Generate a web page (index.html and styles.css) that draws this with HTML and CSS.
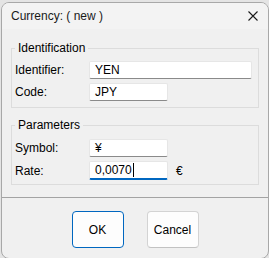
FILE: index.html
```html
<!DOCTYPE html>
<html lang="en">
<head>
    <meta charset="UTF-8">
    <link rel="stylesheet" href="styles.css">
</head>
<body>
    <div class="window">
        <div class="titlebar">
            <span class="title">Currency: ( new )</span>
            <svg class="close" width="10" height="10" viewBox="0 0 10 10">
                <path d="M0.5,0.5 L9.5,9.5 M9.5,0.5 L0.5,9.5" stroke="#1a1a1a" stroke-width="1.1" fill="none"/>
            </svg>
        </div>

        <fieldset class="group">
            <legend>Identification</legend>
            <div class="row">
                <span class="lbl">Identifier:</span>
                <div class="edit wide">YEN</div>
            </div>
            <div class="row">
                <span class="lbl">Code:</span>
                <div class="edit">JPY</div>
            </div>
        </fieldset>

        <fieldset class="group second">
            <legend>Parameters</legend>
            <div class="row">
                <span class="lbl">Symbol:</span>
                <div class="edit">¥</div>
            </div>
            <div class="row">
                <span class="lbl">Rate:</span>
                <div class="edit focused">0,0070<span class="caret"></span></div>
                <span class="unit">€</span>
            </div>
        </fieldset>

        <div class="footer">
            <button class="btn default">OK</button>
            <button class="btn">Cancel</button>
        </div>
    </div>
</body>
</html>
```

FILE: styles.css
```css
:root {
    --face: #f0f0f0;
    --title: #f3f3f3;
    --group-line: #dcdcdc;
    --accent: #0067c0;
    --text: #000000;
}

html, body {
    margin: 0;
    padding: 0;
}

body {
    background: #e4e4e4;
    font-family: 'Liberation Sans', Arial, sans-serif;
    font-size: 12px;
    color: var(--text);
}

.window {
    box-sizing: border-box;
    width: 268px;
    margin: 2px 0 0 1px;
    background: var(--face);
    border: 1px solid #a8a8a8;
    border-radius: 8px;
    overflow: hidden;
}

.titlebar {
    height: 26px;
    display: flex;
    align-items: center;
    justify-content: space-between;
    padding: 0 10px 0 9px;
    background: var(--title);
}

.title {
    color: #1a1a1a;
}

.close {
    display: block;
}

.group {
    margin: 12px 9px 0 9px;
    padding: 5px 6px 6px 3px;
    border: 1px solid var(--group-line);
    display: flex;
    flex-direction: column;
    gap: 4px;
    min-width: 0;
}

.group.second {
    margin-top: 10px;
    padding-top: 6px;
    padding-bottom: 4px;
}

.group legend {
    padding: 0 3px;
    line-height: 15px;
    font-size: 12px;
}

.row {
    display: flex;
    align-items: center;
}

.lbl {
    width: 74px;
    flex: none;
}

.edit {
    box-sizing: border-box;
    width: 79px;
    height: 18px;
    padding: 0 5px;
    line-height: 16px;
    background: #ffffff;
    border: 1px solid #e6e6e6;
    border-bottom-color: #8a8a8a;
    border-radius: 2px;
    display: flex;
    align-items: center;
}

.edit.wide {
    width: 164px;
}

.edit.focused {
    height: 19px;
    border-bottom: 2px solid var(--accent);
}

.caret {
    display: inline-block;
    width: 1px;
    height: 14px;
    margin-left: 1px;
    background: #000000;
}

.unit {
    margin-left: 8px;
}

.footer {
    margin-top: 12px;
    border-top: 1px solid #a3a3a3;
    padding: 13px 0 10px 0;
    display: flex;
    justify-content: center;
    gap: 23px;
}

.btn {
    box-sizing: border-box;
    width: 52px;
    height: 37px;
    padding: 0;
    font-family: inherit;
    font-size: 12px;
    color: var(--text);
    background: #fdfdfd;
    border: 1px solid #d3d3d3;
    border-bottom-color: #c2c2c2;
    border-radius: 4px;
}

.btn.default {
    border: 1px solid var(--accent);
}
```
